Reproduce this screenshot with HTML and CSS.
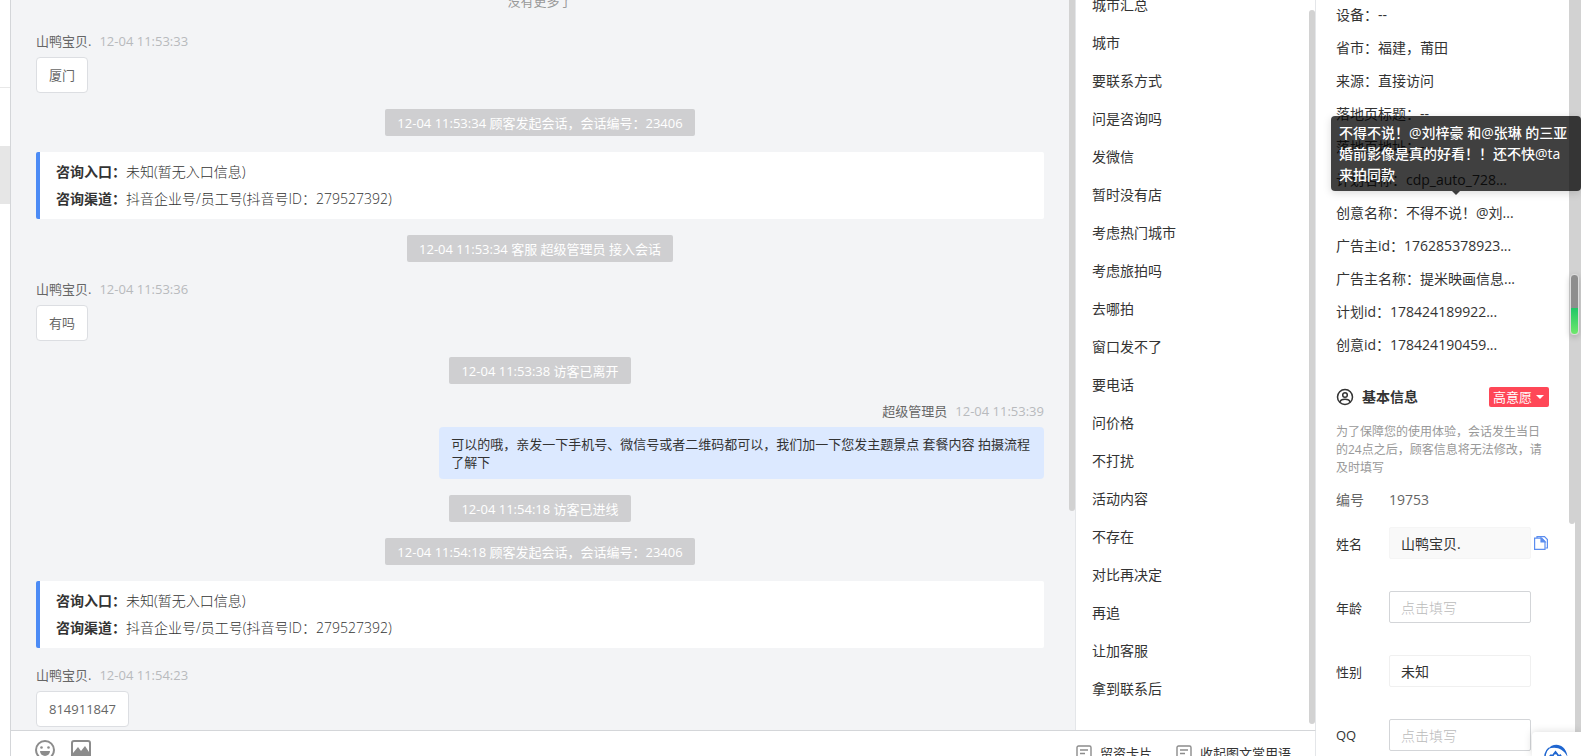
FILE: index.html
```html
<!DOCTYPE html>
<html lang="zh-CN">

<head>
    <meta charset="UTF-8">
    <meta name="viewport" content="width=device-width, initial-scale=1.0">
    <title>客服会话</title>
    <link rel="stylesheet" href="styles.css">
</head>

<body>
    <div class="app">
        <!-- session list edge -->
        <aside class="rail">
            <div class="rail-item"></div>
            <div class="rail-item"></div>
            <div class="rail-item active"></div>
        </aside>

        <main class="main">
            <div class="main-top">
                <section class="chat">
                    <div class="chat-list">
                        <p class="no-more">没有更多了</p>

                        <div class="message">
                            <div class="message-head"><span>山鸭宝贝.</span><time>12-04 11:53:33</time></div>
                            <div class="bubble">厦门</div>
                        </div>
                        <p class="notice">12-04 11:53:34 顾客发起会话，会话编号：23406</p>
                        <div class="source-card">
                            <p><b>咨询入口：</b>未知(暂无入口信息)</p>
                            <p><b>咨询渠道：</b>抖音企业号/员工号(抖音号ID：279527392)</p>
                        </div>
                        <p class="notice">12-04 11:53:34 客服 超级管理员 接入会话</p>
                        <div class="message">
                            <div class="message-head"><span>山鸭宝贝.</span><time>12-04 11:53:36</time></div>
                            <div class="bubble">有吗</div>
                        </div>
                        <p class="notice">12-04 11:53:38 访客已离开</p>
                        <div class="message mine">
                            <div class="message-head"><span>超级管理员</span><time>12-04 11:53:39</time></div>
                            <div class="bubble">可以的哦，亲发一下手机号、微信号或者二维码都可以，我们加一下您发主题景点 套餐内容 拍摄流程了解下</div>
                        </div>
                        <p class="notice">12-04 11:54:18 访客已进线</p>
                        <p class="notice">12-04 11:54:18 顾客发起会话，会话编号：23406</p>
                        <div class="source-card">
                            <p><b>咨询入口：</b>未知(暂无入口信息)</p>
                            <p><b>咨询渠道：</b>抖音企业号/员工号(抖音号ID：279527392)</p>
                        </div>
                        <div class="message">
                            <div class="message-head"><span>山鸭宝贝.</span><time>12-04 11:54:23</time></div>
                            <div class="bubble">814911847</div>
                        </div>
                    </div>
                    <div class="scrollbar"><div class="thumb chat-thumb"></div></div>
                </section>

                <!-- quick phrases -->
                <section class="phrases">
                    <ul class="phrase-list">
                        <li>城市汇总</li>
                        <li>城市</li>
                        <li>要联系方式</li>
                        <li>问是咨询吗</li>
                        <li>发微信</li>
                        <li>暂时没有店</li>
                        <li>考虑热门城市</li>
                        <li>考虑旅拍吗</li>
                        <li>去哪拍</li>
                        <li>窗口发不了</li>
                        <li>要电话</li>
                        <li>问价格</li>
                        <li>不打扰</li>
                        <li>活动内容</li>
                        <li>不存在</li>
                        <li>对比再决定</li>
                        <li>再追</li>
                        <li>让加客服</li>
                        <li>拿到联系后</li>
                    </ul>
                    <div class="scrollbar"><div class="thumb phrase-thumb"></div></div>
                </section>
            </div>

            <div class="toolbar">
                <button class="icon-btn" aria-label="表情">
                    <svg width="20" height="20" viewBox="0 0 20 20" fill="none" stroke="#8c8c8c" stroke-width="2">
                        <circle cx="10" cy="10" r="9" />
                        <circle cx="6.5" cy="7.5" r="1.3" fill="#8c8c8c" stroke="none" />
                        <circle cx="13.5" cy="7.5" r="1.3" fill="#8c8c8c" stroke="none" />
                        <path d="M5 11h10a5 5 0 0 1-10 0z" fill="#8c8c8c" stroke="none" />
                    </svg>
                </button>
                <button class="icon-btn" aria-label="图片">
                    <svg width="20" height="20" viewBox="0 0 20 20">
                        <rect x="1" y="1" width="18" height="17" rx="2" fill="none" stroke="#8c8c8c" stroke-width="2" />
                        <path d="M2 13l5-6 3 4 4-5 4 6v6H2z" fill="#8c8c8c" />
                    </svg>
                </button>
                <div class="toolbar-right">
                    <button class="text-btn">
                        <svg width="16" height="16" viewBox="0 0 16 16" fill="none" stroke="#8c8c8c" stroke-width="1.4">
                            <rect x="1" y="1" width="14" height="13" rx="1.5" />
                            <path d="M4 5h8M4 8.5h5" />
                        </svg>留资卡片</button>
                    <button class="text-btn">
                        <svg width="16" height="16" viewBox="0 0 16 16" fill="none" stroke="#8c8c8c" stroke-width="1.4">
                            <rect x="1" y="1" width="14" height="13" rx="1.5" />
                            <path d="M4 5h8M4 8.5h5" />
                        </svg>收起图文常用语</button>
                </div>
            </div>
        </main>

        <!-- customer info -->
        <aside class="info">
            <div class="info-content">
                <ul class="visit">
                    <li>设备：--</li>
                    <li>省市：福建，莆田</li>
                    <li>来源：直接访问</li>
                    <li>落地页标题：--</li>
                    <li>落地页地址：--</li>
                    <li>计划名称：cdp_auto_728...</li>
                    <li class="has-tip">创意名称：不得不说！@刘...
                        <div class="tooltip" role="tooltip">不得不说！@刘梓豪 和@张琳 的三亚婚前影像是真的好看！！还不快@ta来拍同款</div>
                    </li>
                    <li>广告主id：176285378923...</li>
                    <li>广告主名称：提米映画信息...</li>
                    <li>计划id：178424189922...</li>
                    <li>创意id：178424190459...</li>
                </ul>

                <div class="basic-head">
                    <svg width="18" height="18" viewBox="0 0 18 18" fill="none" stroke="#333" stroke-width="1.5">
                        <circle cx="9" cy="9" r="7.5" />
                        <circle cx="9" cy="7" r="2.3" />
                        <path d="M4 14c.5-2 2-2.700 5-2.700s4.500.700 5 2.700" />
                    </svg>
                    <h2>基本信息</h2>
                    <button class="tag">高意愿<span class="caret"></span></button>
                </div>
                <p class="tips">为了保障您的使用体验，会话发生当日的24点之后，顾客信息将无法修改，请及时填写</p>

                <form class="form">
                    <div class="number-row"><span>编号</span><span>19753</span></div>
                    <div class="form-row">
                        <label for="name">姓名</label>
                        <input class="readonly" id="name" type="text" value="山鸭宝贝." readonly>
                        <button class="copy" type="button" aria-label="复制">
                            <svg width="14" height="14" viewBox="0 0 14 14" fill="none" stroke="#5b8def" stroke-width="1.2">
                                <path d="M3 2V.6h7.500l2.900 2.900v8.500h-2" />
                                <path d="M.6 2.200h7l3.400 3.400v7.800H.6z" />
                                <path d="M7 2.200v3.800h4z" fill="#5b8def" />
                            </svg>
                        </button>
                    </div>
                    <div class="form-row">
                        <label for="age">年龄</label>
                        <input id="age" type="text" placeholder="点击填写">
                    </div>
                    <div class="form-row">
                        <label for="gender">性别</label>
                        <select id="gender">
                            <option>未知</option>
                        </select>
                    </div>
                    <div class="form-row">
                        <label for="qq">QQ</label>
                        <input id="qq" type="text" placeholder="点击填写">
                    </div>
                </form>
            </div>
            <div class="scrollbar"><div class="thumb info-thumb"></div></div>
            <div class="scrollbar"><div class="thumb page-thumb"></div></div>
        </aside>
    </div>

    <div class="meter"></div>
    <button class="helper" aria-label="助手">
        <svg width="24" height="24" viewBox="0 0 24 24">
            <path d="M2 17A11 11 0 0 1 5 4" fill="none" stroke="#1f66d0" stroke-width="1.5" />
            <path d="M4 5C9-2 22-1 23.500 13C20 5 12 1.500 4 5z" fill="#1f66d0" />
            <path d="M4 13l3-3 1 1 3.500-4.500L15 11l1.500-1 2.500 4v6H5z" fill="#1f66d0" />
            <circle cx="11.500" cy="12" r="1.800" fill="#fff" />
        </svg>
    </button>
</body>

</html>
```
FILE: styles.css
```css
* {
    box-sizing: border-box;
    margin: 0;
    padding: 0;
}

body {
    font-family: "Open Sans", "Noto Sans CJK SC", sans-serif;
    font-size: 14px;
    color: #333;
    background-color: #fff;
    overflow: hidden;
}

ul {
    list-style: none;
}

button,
input,
select {
    font: inherit;
    color: inherit;
    border: none;
    background-color: transparent;
}

button {
    cursor: pointer;
}

.app {
    display: flex;
    height: 100vh;
    overflow: hidden;
}

/* left edge */
.rail {
    flex: none;
    width: 11px;
    border-right: 1px solid #d4d6d9;
}

.rail-item {
    height: 58px;
}

.rail-item:first-child {
    height: 88px;
    border-bottom: 1px solid #e8e8e8;
}

.rail-item.active {
    background-color: #e6e6e6;
}

.main {
    flex: 1;
    min-width: 0;
    display: flex;
    flex-direction: column;
}

.main-top {
    flex: 1;
    min-height: 0;
    display: flex;
}

.scrollbar {
    flex: none;
    width: 6px;
}

.thumb {
    background-color: #d2d2d2;
    border-radius: 3px;
}

/* chat */
.chat {
    flex: 1;
    min-width: 0;
    display: flex;
    background-color: #f3f4f6;
}

.chat-list {
    flex: 1;
    min-width: 0;
    display: flex;
    flex-direction: column;
    justify-content: flex-end;
    gap: 16px;
    padding: 0 25px 3px;
    overflow: hidden;
    font-size: 13px;
    line-height: 18px;
}

.chat-list > * {
    flex: none;
}

.chat-thumb {
    height: 70%;
    border-radius: 0 0 3px 3px;
}

.no-more {
    text-align: center;
    color: #999;
    padding-bottom: 4px;
}

.message {
    display: flex;
    flex-direction: column;
    align-items: flex-start;
    gap: 5px;
}

.message-head {
    display: flex;
    gap: 8px;
    line-height: 22px;
    color: #666;
}

.message-head time {
    color: #b8babd;
}

.bubble {
    max-width: 60%;
    padding: 8px 12px;
    border: 1px solid #dcdee2;
    border-radius: 4px;
    background-color: #fff;
    color: #666;
}

.mine {
    align-items: flex-end;
}

.mine .bubble {
    border: none;
    background-color: #dce9ff;
    color: #333;
}

.notice {
    align-self: center;
    padding: 1px 12px 0;
    line-height: 26px;
    border-radius: 2px;
    background-color: #cfcfd1;
    color: #fff;
}

.source-card {
    padding: 6px 16px 7px;
    border-left: 4px solid #4c8bf5;
    border-radius: 2px;
    background-color: #fff;
    font-size: 14px;
    font-weight: 300;
    line-height: 27px;
}

.source-card b {
    font-weight: 700;
}

/* quick phrases */
.phrases {
    flex: none;
    width: 241px;
    display: flex;
    border-left: 1px solid #e4e6e9;
    border-right: 1px solid #e4e6e9;
    overflow: hidden;
}

.phrase-list {
    flex: 1;
    margin-top: -14px;
    padding-left: 16px;
    line-height: 38px;
}

.phrases .scrollbar {
    padding: 10px 0 6px;
}

.phrase-thumb {
    height: 100%;
}

/* toolbar */
.toolbar {
    flex: none;
    display: flex;
    align-items: flex-start;
    gap: 16px;
    height: 26px;
    padding: 9px 24px 0 24px;
    border-top: 1px solid #d4d6d9;
    border-right: 1px solid #e4e6e9;
    overflow: hidden;
}

.icon-btn {
    height: 20px;
}

.toolbar-right {
    display: flex;
    gap: 24px;
    margin-left: auto;
    padding-top: 3px;
}

.text-btn {
    display: flex;
    align-items: center;
    gap: 8px;
    font-size: 13px;
    line-height: 20px;
}

/* customer info */
.info {
    flex: none;
    width: 265px;
    display: flex;
}

.info-content {
    flex: 1;
    min-width: 0;
    padding: 0 20px;
}

.visit {
    margin-top: -2px;
    line-height: 33px;
    white-space: nowrap;
}

.has-tip {
    position: relative;
}

.tooltip {
    position: absolute;
    left: -5px;
    bottom: 38px;
    width: 250px;
    padding: 6px 8px;
    border-radius: 4px;
    background-color: rgba(0, 0, 0, .75);
    box-shadow: 0 2px 8px rgba(0, 0, 0, .15);
    color: #fff;
    font-weight: 500;
    line-height: 21px;
    white-space: normal;
}

.tooltip::after {
    content: "";
    position: absolute;
    top: 100%;
    left: 50%;
    margin-left: -4px;
    border: 4px solid transparent;
    border-top-color: rgba(0, 0, 0, .75);
    border-bottom: none;
}

.basic-head {
    display: flex;
    align-items: center;
    gap: 8px;
    margin-top: 25px;
}

.basic-head h2 {
    font-size: 14px;
    line-height: 22px;
}

.tag {
    display: flex;
    align-items: center;
    gap: 4px;
    margin-left: auto;
    padding: 0 5px 0 4px;
    border-radius: 2px;
    background-color: #ff4757;
    color: #fff;
    font-size: 13px;
    line-height: 20px;
}

.caret {
    border: 4px solid transparent;
    border-top-color: #fff;
    border-bottom: none;
}

.tips {
    margin-top: 15px;
    color: #999;
    font-size: 12px;
    line-height: 18px;
}

.form {
    margin-top: 12px;
}

.number-row {
    display: grid;
    grid-template-columns: 53px 1fr;
    line-height: 22px;
    color: #666;
}

.form-row {
    display: grid;
    grid-template-columns: 53px 142px 1fr;
    align-items: center;
    height: 32px;
    margin-bottom: 32px;
}

.number-row + .form-row {
    margin-top: 16px;
}

.form-row label {
    font-size: 13px;
}

.form-row input,
.form-row select {
    width: 100%;
    height: 32px;
    padding: 0 11px;
    border: 1px solid #d3d5d8;
    border-radius: 2px;
    appearance: none;
}

.form-row .readonly {
    border-color: #f5f5f5;
    background-color: #f9f9f9;
}

.form-row select {
    border-color: #f0f0f0;
}

.form-row input::placeholder {
    color: #bbb;
    font-weight: 300;
}

.copy {
    display: flex;
    padding-left: 3px;
}

.info-thumb {
    height: 524px;
    border-radius: 0 0 3px 3px;
}

.page-thumb {
    height: 100%;
    border-radius: 0;
}

/* floating widgets */
.meter {
    position: fixed;
    top: 274px;
    right: 2px;
    width: 9px;
    height: 61px;
    border: 1px solid #ddd;
    border-radius: 4px;
    background: linear-gradient(#8e8e8e 33px, #1fc767 33px, #6fe86c);
    box-shadow: 0 2px 6px rgba(0, 0, 0, .2);
}

.helper {
    position: fixed;
    right: 0;
    bottom: 0;
    width: 49px;
    height: 24px;
    padding: 12px 12px 0;
    border-radius: 4px 0 0 0;
    background-color: #fff;
    box-shadow: 0 0 8px rgba(0, 0, 0, .15);
    overflow: hidden;
}

.helper svg {
    display: block;
}
```
